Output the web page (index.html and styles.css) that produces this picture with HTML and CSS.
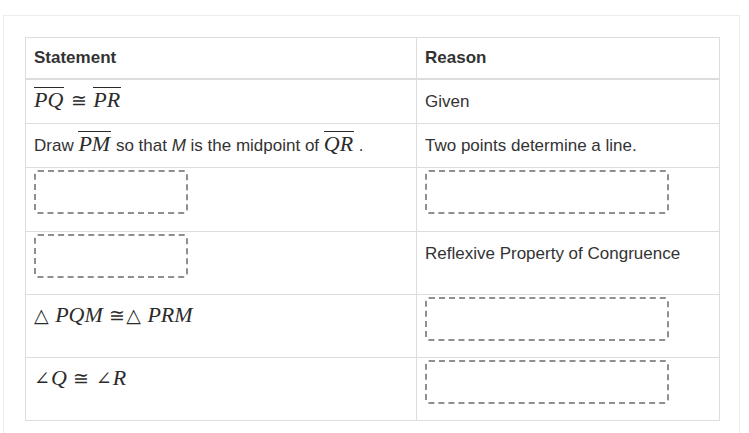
FILE: index.html
```html
<!DOCTYPE html>
<html lang="en">
<head>
<meta charset="utf-8">
<title>Proof</title>
<link rel="stylesheet" href="styles.css">
</head>
<body>
<div class="card">
  <table class="proof">
    <colgroup><col class="col-statement"><col class="col-reason"></colgroup>
    <thead>
      <tr><th>Statement</th><th>Reason</th></tr>
    </thead>
    <tbody>
      <tr>
        <td><span class="math"><span class="ov">PQ</span> <span class="rel">≅</span> <span class="ov">PR</span></span></td>
        <td>Given</td>
      </tr>
      <tr>
        <td>Draw <span class="math"><span class="ov">PM</span></span> so that <i>M</i> is the midpoint of <span class="math"><span class="ov">QR</span></span> .</td>
        <td>Two points determine a line.</td>
      </tr>
      <tr class="first-slot">
        <td class="slot"><div class="drop drop-short"></div></td>
        <td class="slot"><div class="drop drop-long"></div></td>
      </tr>
      <tr>
        <td class="slot"><div class="drop drop-short"></div></td>
        <td>Reflexive Property of Congruence</td>
      </tr>
      <tr>
        <td><span class="math"><span class="up">△</span> PQM <span class="rel">≅</span><span class="up">△</span> PRM</span></td>
        <td class="slot"><div class="drop drop-long"></div></td>
      </tr>
      <tr>
        <td><span class="math"><span class="up">∠</span>Q <span class="rel">≅</span> <span class="up">∠</span>R</span></td>
        <td class="slot"><div class="drop drop-long"></div></td>
      </tr>
    </tbody>
  </table>
</div>
</body>
</html>
```
FILE: styles.css
```css
html, body {
  margin: 0;
  padding: 0;
  background: #fff;
}
body {
  font-family: "Liberation Sans", Arial, sans-serif;
  color: #333;
}
.card {
  margin: 15px 9px 0 3px;
  border: 1px solid #ececec;
  padding: 21px 19px 21px 21px;
}
.proof {
  width: 100%;
  border-collapse: collapse;
  border: 1px solid #ddd;
  table-layout: fixed;
}
.col-statement { width: 391px; }
.proof th, .proof td {
  border: 1px solid #ddd;
  text-align: left;
  vertical-align: top;
  padding: 12px 8px 11px;
  font-size: 17px;
  line-height: 20px;
  height: 20px;
}
.proof th {
  font-weight: bold;
  padding: 10px 8px 10px;
  border-bottom: 2px solid #ddd;
}
.proof td.slot {
  padding: 2px 8px 16px;
  height: 44px;
}
.proof .first-slot td.slot {
  padding-bottom: 17px;
}
.drop {
  box-sizing: border-box;
  height: 44px;
  border: 2px dashed #8f8f8f;
  border-radius: 4px;
}
.drop-short { width: 154px; }
.drop-long { width: 244px; }
.math {
  font-family: "Liberation Serif", "Times New Roman", serif;
  font-style: italic;
  font-size: 22px;
  line-height: 0;
  color: #2b2b2b;
}
.math .rel, .math .up {
  font-style: normal;
  font-family: "DejaVu Serif", serif;
  font-size: 19px;
}
.math .rel {
  margin: 0 1px;
}
.math .up {
  margin-right: 1px;
}
.ov {
  position: relative;
  padding-right: 1px;
}
.ov::before {
  content: "";
  position: absolute;
  left: 0;
  right: 0;
  top: 0;
  border-top: 1px solid #2b2b2b;
}
.proof td i {
  font-style: italic;
}
```
